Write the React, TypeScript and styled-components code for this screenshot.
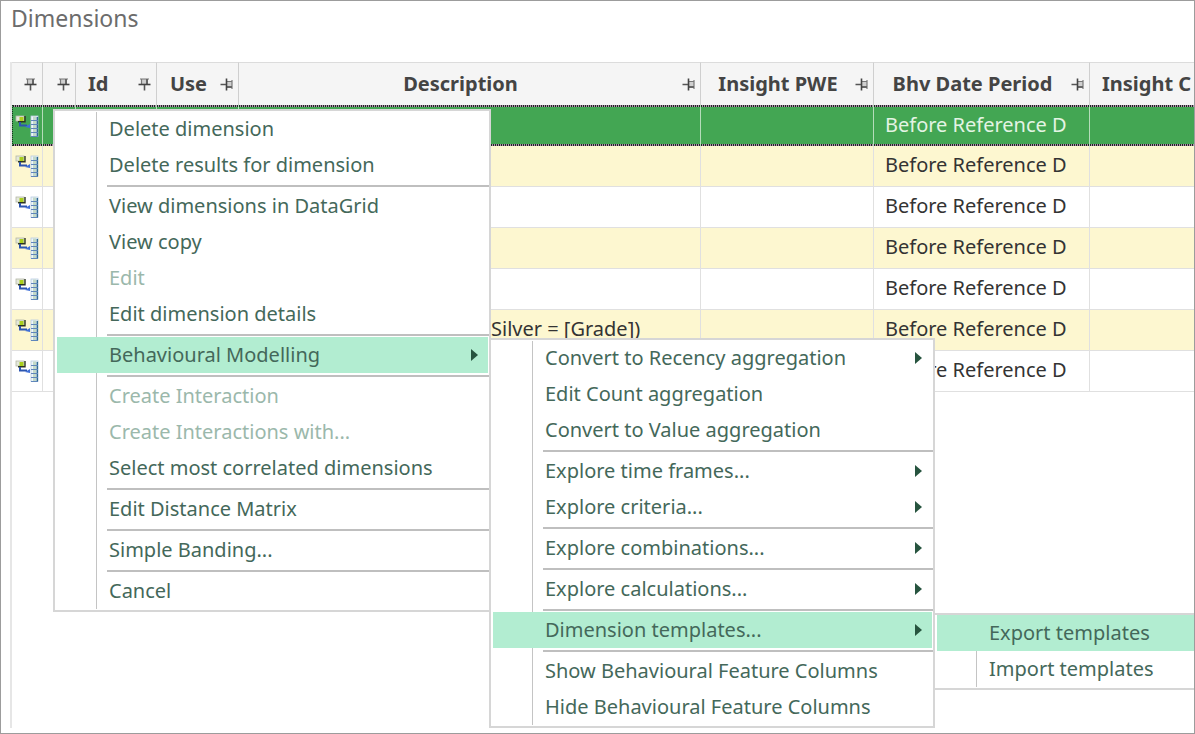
import React from "react";
import styled, { createGlobalStyle, css } from "styled-components";

const GlobalStyle = createGlobalStyle`
  *, *::before, *::after { box-sizing: border-box; }
  html, body { margin: 0; padding: 0; }
  body { background: #fff; font-family: "Noto Sans", "Open Sans", sans-serif; font-size: 20px; }
`;

const Page = styled.main`
  position: relative;
  display: flex;
  flex-direction: column;
  min-height: 100vh;
  overflow: hidden;
  border: 1px solid #9c9c9c;
`;

const Title = styled.h1`
  margin: 0;
  padding: 0 10px;
  height: 61px;
  font-size: 23px;
  line-height: 34px;
  font-weight: 400;
  color: #6c6c6c;
`;

const GridPanel = styled.section`
  flex: 1;
  margin: 0 0 5px 9px;
  border-left: 2px solid #e6e6e6;
`;

const Table = styled.table`
  width: 100%;
  table-layout: fixed;
  border-collapse: separate;
  border-spacing: 0;
`;

const Col = styled.col<{ $w?: number }>`
  width: ${(p) => (p.$w ? `${p.$w}px` : "auto")};
`;

const HeaderCell = styled.th`
  height: 43px;
  padding: 0;
  overflow: hidden;
  background: #f5f5f5;
  border-top: 1px solid #dcdcdc;
  border-right: 1px solid #cfcfcf;
  &:last-child { border-right: 0; }
`;

const HeaderContent = styled.div`
  display: flex;
  align-items: center;
  padding-right: 5px;
`;

const HeaderLabel = styled.span<{ $start?: boolean }>`
  flex: 1;
  padding-left: ${(p) => (p.$start ? "12px" : "0")};
  text-align: ${(p) => (p.$start ? "left" : "center")};
  line-height: 28px;
  font-weight: 700;
  color: #444;
  white-space: nowrap;
`;

const PinButton = styled.button<{ $turned?: boolean }>`
  display: block;
  flex: none;
  width: 13px;
  height: 13px;
  padding: 0;
  border: 0;
  background: none;
  svg { display: block; transform: ${(p) => (p.$turned ? "rotate(90deg)" : "none")}; }
`;

const Cell = styled.td<{ $indent?: boolean }>`
  height: 41px;
  padding: 0 0 2px ${(p) => (p.$indent ? "252px" : "11px")};
  border-right: 1px solid #e0e0e0;
  border-bottom: 1px solid #e0e0e0;
  line-height: 28px;
  color: #333;
  white-space: nowrap;
  overflow: hidden;
  &:last-child { border-right: 0; }
`;

const IconCell = styled(Cell)`
  padding: 0 0 0 3px;
  svg { display: block; }
`;

const dots = "repeating-linear-gradient(90deg, #1d2b22 0 1px, #b48fae 1px 2px)";

const Row = styled.tr<{ $tone: "selected" | "odd" | "even" }>`
  ${(p) => p.$tone === "odd" && css`${Cell} { background: #fdf7d0; }`}
  ${(p) =>
    p.$tone === "selected" &&
    css`
      ${Cell} {
        color: #e4f4e4;
        border-right-color: #b5dcba;
        border-bottom: 0;
        background: ${dots} 0 0 / 100% 2px no-repeat, ${dots} 0 100% / 100% 2px no-repeat, #43a653;
      }
      ${Cell}:first-child { border-left: 1px dotted #1d2b22; padding-left: 2px; }
    `}
`;

const Menu = styled.ul<{ $w: number }>`
  position: absolute;
  z-index: 1;
  width: ${(p) => p.$w}px;
  margin: 0;
  padding: 0 0 1px;
  list-style: none;
  background: #fff;
  border: 2px solid #d6d6d6;
  &::before {
    content: "";
    position: absolute;
    top: 1px;
    bottom: 1px;
    left: 41px;
    width: 1px;
    background: #c4c4c4;
  }
`;

const ContextMenu = styled(Menu)`
  top: 108px;
  left: 52px;
`;

const SubMenu = styled(Menu)`
  top: 1px;
  left: 100%;
`;

const MenuEntry = styled.li`
  position: relative;
`;

const MenuButton = styled.button<{ $active?: boolean }>`
  position: relative;
  display: flex;
  align-items: center;
  justify-content: space-between;
  width: calc(100% - 3px);
  height: 36px;
  margin: 0 1px 0 2px;
  padding: 0 10px 0 52px;
  border: 0;
  background: ${(p) => (p.$active ? "#b2edd1" : "transparent")};
  color: #44685a;
  font: inherit;
  line-height: 28px;
  text-align: left;
  white-space: nowrap;
  &:disabled { color: #9bb8ab; }
`;

const Divider = styled.li`
  height: 5px;
  margin-left: 52px;
  padding-top: 2px;
  &::before { content: ""; display: block; height: 2px; background: #bfbfbf; }
`;

type Entry = {
  label: string;
  disabled?: boolean;
  active?: boolean;
  arrow?: boolean;
  sub?: { width: number; entries: (Entry | null)[] };
};

const templates: (Entry | null)[] = [{ label: "Export templates", active: true }, { label: "Import templates" }];

const modelling: (Entry | null)[] = [
  { label: "Convert to Recency aggregation", arrow: true },
  { label: "Edit Count aggregation" },
  { label: "Convert to Value aggregation" },
  null,
  { label: "Explore time frames...", arrow: true },
  { label: "Explore criteria...", arrow: true },
  null,
  { label: "Explore combinations...", arrow: true },
  null,
  { label: "Explore calculations...", arrow: true },
  null,
  { label: "Dimension templates...", arrow: true, active: true, sub: { width: 300, entries: templates } },
  null,
  { label: "Show Behavioural Feature Columns" },
  { label: "Hide Behavioural Feature Columns" },
];

const dimensionMenu: (Entry | null)[] = [
  { label: "Delete dimension" },
  { label: "Delete results for dimension" },
  null,
  { label: "View dimensions in DataGrid" },
  { label: "View copy" },
  { label: "Edit", disabled: true },
  { label: "Edit dimension details" },
  null,
  { label: "Behavioural Modelling", arrow: true, active: true, sub: { width: 446, entries: modelling } },
  null,
  { label: "Create Interaction", disabled: true },
  { label: "Create Interactions with...", disabled: true },
  { label: "Select most correlated dimensions" },
  null,
  { label: "Edit Distance Matrix" },
  null,
  { label: "Simple Banding..." },
  null,
  { label: "Cancel" },
];

const Arrow = () => (
  <svg width="7" height="12" viewBox="0 0 7 12" aria-hidden="true">
    <path d="M0 0L7 6L0 12Z" fill="#27543f" />
  </svg>
);

const Entries = ({ entries }: { entries: (Entry | null)[] }) => (
  <>
    {entries.map((e, i) =>
      e === null ? (
        <Divider key={i} role="separator" />
      ) : (
        <MenuEntry key={i} role="none">
          <MenuButton type="button" role="menuitem" disabled={e.disabled} $active={e.active}>
            {e.label}
            {e.arrow && <Arrow />}
          </MenuButton>
          {e.sub && (
            <SubMenu role="menu" aria-label={e.label} $w={e.sub.width}>
              <Entries entries={e.sub.entries} />
            </SubMenu>
          )}
        </MenuEntry>
      )
    )}
  </>
);

const Pin = ({ turned, column }: { turned?: boolean; column: string }) => (
  <PinButton type="button" aria-label={`Pin ${column}`} $turned={turned}>
    <svg width="13" height="13" viewBox="0 0 13 13" fill="none">
      <rect x="3" y="1" width="7" height="5" fill="#cfcfcf" />
      <path d="M2 1H11M3.5 1V7" stroke="#777" strokeWidth="1.2" />
      <path d="M9 1V7" stroke="#666" strokeWidth="2" />
      <path d="M0.5 6.5H12.5" stroke="#444" strokeWidth="1.6" />
      <path d="M6.5 7V12.5" stroke="#555" strokeWidth="1.6" />
    </svg>
  </PinButton>
);

const DimensionIcon = () => (
  <svg width="24" height="24" viewBox="0 0 24 24" aria-hidden="true">
    <rect x="1" y="2" width="8" height="5" fill="#e4e8dc" stroke="#b5b8a6" strokeWidth="0.8" />
    <rect x="4.5" y="3" width="4" height="4" fill="#a9cf1c" />
    <path d="M3 7.8H10V2" fill="none" stroke="#2c3420" strokeWidth="1.4" />
    <path d="M5 8V11.5H12" fill="none" stroke="#2c55b0" strokeWidth="2" />
    <path d="M10 13L15 10V14Z" fill="#3f6fd8" />
    <rect x="16" y="2" width="7" height="20.5" fill="#eef5fb" stroke="#b7cbe0" strokeWidth="0.8" />
    <rect x="18" y="2.5" width="3" height="20" fill="#c3d9c9" />
    <path d="M22.3 3V22.5" stroke="#2f6b93" strokeWidth="1.5" />
    <path d="M16 6.5H23M16 10.5H23M16 14.5H23M16 18.5H23M16 22.5H23" stroke="#5f86bb" strokeWidth="1.1" />
  </svg>
);

const columns = [
  { name: "", width: 31 },
  { name: "", width: 33 },
  { name: "Id", width: 81, start: true },
  { name: "Use", width: 82, turned: true },
  { name: "Description", width: 462, turned: true },
  { name: "Insight PWE", width: 173, turned: true },
  { name: "Bhv Date Period", width: 216, turned: true },
];

const descriptions = ["", "", "", "", "", "Silver = [Grade])", ""];

export default function App() {
  return (
    <>
      <GlobalStyle />
      <Page>
        <Title>Dimensions</Title>
        <GridPanel>
          <Table>
            <colgroup>
              {columns.map((c, i) => (
                <Col key={i} $w={c.width} />
              ))}
              <Col />
            </colgroup>
            <thead>
              <tr>
                {columns.map((c, i) => (
                  <HeaderCell key={i} scope="col">
                    <HeaderContent>
                      <HeaderLabel $start={c.start}>{c.name}</HeaderLabel>
                      <Pin turned={c.turned} column={c.name || `column ${i + 1}`} />
                    </HeaderContent>
                  </HeaderCell>
                ))}
                <HeaderCell scope="col">
                  <HeaderContent>
                    <HeaderLabel $start>Insight C</HeaderLabel>
                  </HeaderContent>
                </HeaderCell>
              </tr>
            </thead>
            <tbody>
              {descriptions.map((text, i) => (
                <Row key={i} $tone={i === 0 ? "selected" : i % 2 ? "odd" : "even"} aria-selected={i === 0}>
                  <IconCell>
                    <DimensionIcon />
                  </IconCell>
                  <Cell />
                  <Cell />
                  <Cell />
                  <Cell $indent>{text}</Cell>
                  <Cell />
                  <Cell>Before Reference D</Cell>
                  <Cell />
                </Row>
              ))}
            </tbody>
          </Table>
        </GridPanel>
        <ContextMenu role="menu" aria-label="Dimension actions" $w={438}>
          <Entries entries={dimensionMenu} />
        </ContextMenu>
      </Page>
    </>
  );
}
